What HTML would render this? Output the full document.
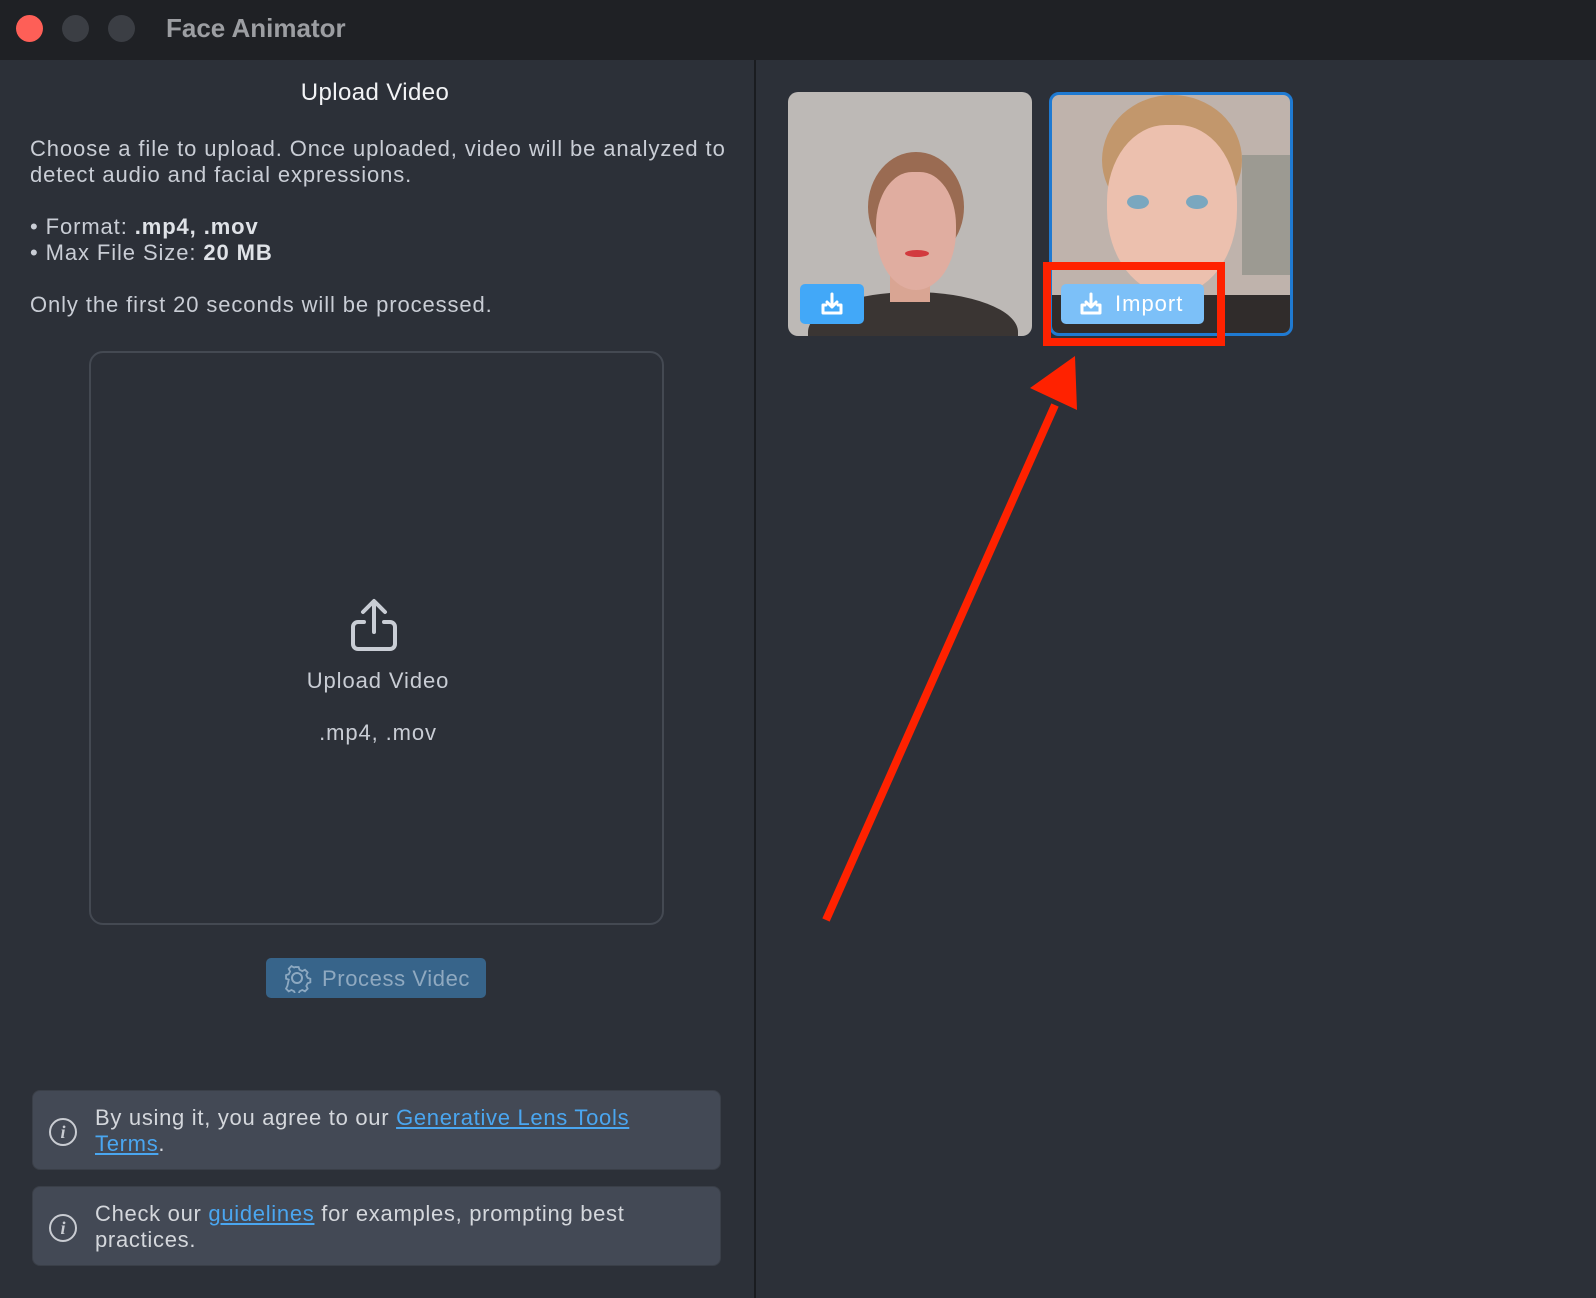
<!DOCTYPE html>
<html><head><meta charset="utf-8"><style>
*{margin:0;padding:0;box-sizing:border-box}
body{width:1596px;height:1298px;background:#2c3038;font-family:"Liberation Sans",sans-serif;position:relative;overflow:hidden;color:#c9cdd5}
.abs{position:absolute}
.tb{left:0;top:0;width:1596px;height:60px;background:#1f2125}
.dot{width:27px;height:27px;border-radius:50%;top:15px}
.t{font-size:22px;line-height:26px;letter-spacing:0.9px}
b{color:#dfe2e7}
a{color:#4aa6f0;text-decoration:underline}
.info{left:32px;width:689px;height:80px;background:#434955;border-radius:8px;border:1px solid #3a3f48}
.info p{position:absolute;left:62px;top:14px;font-size:22px;line-height:26px;letter-spacing:0.7px;color:#d4d7dc;width:545px}
.ic{position:absolute;left:16px;top:27px;width:28px;height:28px;border:2px solid #c9ccd2;border-radius:50%;font:italic bold 18px "Liberation Serif",serif;color:#c9ccd2;text-align:center;line-height:24px;letter-spacing:0}
</style></head><body>
<div class="abs tb"></div>
<div class="abs dot" style="left:16px;background:#fe5f57"></div>
<div class="abs dot" style="left:62px;background:#3b3e44"></div>
<div class="abs dot" style="left:108px;background:#3b3e44"></div>
<div class="abs" style="left:166px;top:13px;font-size:26px;font-weight:bold;color:#9c9ea2">Face Animator</div>
<div class="abs" style="left:754px;top:60px;width:2px;height:1238px;background:#1a1c20"></div>

<div class="abs" style="left:0;width:750px;top:79px;text-align:center;font-size:24px;color:#f2f3f5;letter-spacing:0.4px">Upload Video</div>
<div class="abs t" style="left:30px;top:136px;width:722px">Choose a file to upload. Once uploaded, video will be analyzed to detect audio and facial expressions.</div>
<div class="abs t" style="left:30px;top:214px">• Format: <b>.mp4, .mov</b><br>• Max File Size: <b>20 MB</b></div>
<div class="abs t" style="left:30px;top:292px">Only the first 20 seconds will be processed.</div>

<div class="abs" style="left:89px;top:351px;width:575px;height:574px;border:2px solid #444952;border-radius:14px"></div>
<svg class="abs" style="left:344px;top:598px" width="60" height="56" viewBox="0 0 60 56" fill="none" stroke="#c9cdd5" stroke-width="4" stroke-linecap="round" stroke-linejoin="round"><path d="M30 4v30M19 14L30 3l11 11M20 24h-6a5 5 0 0 0-5 5v17a5 5 0 0 0 5 5h32a5 5 0 0 0 5-5V29a5 5 0 0 0-5-5h-6"/></svg>
<div class="abs t" style="left:0;width:756px;top:668px;text-align:center">Upload Video</div>
<div class="abs t" style="left:0;width:756px;top:720px;text-align:center">.mp4, .mov</div>

<div class="abs" style="left:266px;top:958px;width:220px;height:40px;background:#37648a;border-radius:5px"></div>
<svg class="abs" style="left:282px;top:963px" width="30" height="30" viewBox="0 0 30 30" fill="none" stroke="#8da9c1" stroke-width="2"><circle cx="15" cy="15" r="5"/><path d="M13 3h4l1 3 3 1.5 3-1.5 3 3-1.5 3 1.5 3 3 1v4l-3 1-1.5 3 1.5 3-3 3-3-1.5-3 1.5-1 3h-4l-1-3-3-1.5-3 1.5-3-3 1.5-3L6 17l-3-1v-4l3-1 1.5-3L6 5l3-3 3 1.5z" transform="scale(.9) translate(1.5 1.5)"/></svg>
<div class="abs" style="left:322px;top:966px;font-size:22px;letter-spacing:0.6px;color:#8fa9c0">Process Videc</div>

<div class="abs info" style="top:1090px"><div class="ic">i</div><p>By using it, you agree to our <a>Generative Lens Tools Terms</a>.</p></div>
<div class="abs info" style="top:1186px"><div class="ic">i</div><p>Check our <a>guidelines</a> for examples, prompting best practices.</p></div>

<!-- thumb 1 -->
<div class="abs" style="left:788px;top:92px;width:244px;height:244px;border-radius:10px;overflow:hidden;background:#bdb9b6">
 <div class="abs" style="left:20px;top:200px;width:210px;height:80px;background:#3a3533;border-radius:50% 50% 0 0"></div>
 <div class="abs" style="left:102px;top:150px;width:40px;height:60px;background:#d9a593"></div>
 <div class="abs" style="left:80px;top:60px;width:96px;height:110px;background:#9a6b52;border-radius:50%"></div>
 <div class="abs" style="left:88px;top:80px;width:80px;height:118px;background:#e0ada0;border-radius:45% 45% 50% 50%"></div>
 <div class="abs" style="left:117px;top:158px;width:24px;height:7px;background:#d23a3e;border-radius:50%"></div>
 <div class="abs" style="left:12px;top:192px;width:64px;height:40px;background:#42a8f8;border-radius:5px"></div>
 <svg class="abs" style="left:31px;top:199px" width="26" height="26" viewBox="0 0 26 26" fill="none" stroke="#fff" stroke-width="3" stroke-linecap="round" stroke-linejoin="round"><path d="M13 3v13M8 11l5 5 5-5M7 14H4v8h18v-8h-3"/></svg>
</div>
<!-- thumb 2 -->
<div class="abs" style="left:1049px;top:92px;width:244px;height:244px;border-radius:10px;overflow:hidden;background:#bfb3ac;border:3px solid #1f7ad2">
 <div class="abs" style="left:190px;top:60px;width:60px;height:120px;background:#9c9a92"></div>
 <div class="abs" style="left:0;top:200px;width:240px;height:50px;background:#302c2b"></div>
 <div class="abs" style="left:50px;top:0;width:140px;height:130px;background:#c2976c;border-radius:50%"></div>
 <div class="abs" style="left:55px;top:30px;width:130px;height:170px;background:#ecc0ae;border-radius:45% 45% 50% 50%"></div>
 <div class="abs" style="left:75px;top:100px;width:22px;height:14px;background:#7aa7bf;border-radius:50%"></div>
 <div class="abs" style="left:134px;top:100px;width:22px;height:14px;background:#7aa7bf;border-radius:50%"></div>
</div>
<div class="abs" style="left:1061px;top:284px;width:143px;height:40px;background:#7cc0f8;border-radius:5px"></div>
<svg class="abs" style="left:1078px;top:291px" width="26" height="26" viewBox="0 0 26 26" fill="none" stroke="#fff" stroke-width="3" stroke-linecap="round" stroke-linejoin="round"><path d="M13 3v13M8 11l5 5 5-5M7 14H4v8h18v-8h-3"/></svg>
<div class="abs" style="left:1115px;top:291px;font-size:22px;letter-spacing:1px;color:#fff">Import</div>
<div class="abs" style="left:1043px;top:262px;width:182px;height:84px;border:8px solid #ff2200"></div>
<svg class="abs" style="left:0;top:0" width="1596" height="1298"><line x1="826" y1="920" x2="1055" y2="405" stroke="#ff2200" stroke-width="8"/><polygon points="1075,356 1030,388 1077,410" fill="#ff2200"/></svg>
</body></html>
